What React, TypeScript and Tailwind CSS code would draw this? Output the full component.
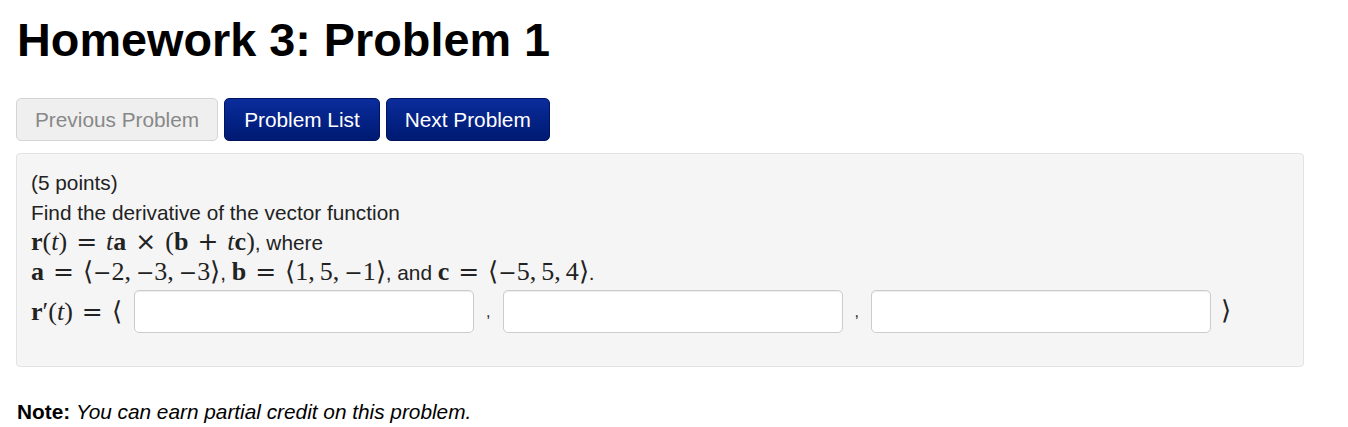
import React from 'react';

const serif = { fontFamily: '"Liberation Serif", "Times New Roman", serif' };
const opFont = { fontFamily: '"DejaVu Sans", sans-serif' };

function M({ children }: { children: React.ReactNode }) {
  return (
    <span className="text-[26px] leading-none" style={serif}>
      {children}
    </span>
  );
}

// relation / binary operator with TeX-like spacing
function Op({ children }: { children: React.ReactNode }) {
  return (
    <span className="mx-[9px] text-[25px] leading-none" style={opFont}>
      {children}
    </span>
  );
}

function Neg() {
  return (
    <span className="text-[22px] leading-none" style={opFont}>
      −
    </span>
  );
}

function Sep() {
  return <span className="mr-[5px]">,</span>;
}

function B({ children }: { children: React.ReactNode }) {
  return <span className="font-bold">{children}</span>;
}

function I({ children }: { children: React.ReactNode }) {
  return <span className="italic">{children}</span>;
}

function AnswerBox() {
  return (
    <input
      type="text"
      className="h-[43px] w-[340px] rounded-[5px] border border-[#cccccc] bg-white shadow-[inset_0_1px_1px_rgba(0,0,0,0.075)] outline-none"
    />
  );
}

export default function App() {
  return (
    <div
      className="min-h-[427px] bg-white px-[16px] pt-[12px] text-[20.8px] text-[#222]"
      style={{ fontFamily: '"Liberation Sans", Arial, sans-serif' }}
    >
      <h1 className="pl-[1px] text-[46.8px] font-bold leading-[56px] text-black">Homework 3: Problem 1</h1>

      <div className="mt-[30px] flex gap-[6px]">
        <button className="h-[43px] rounded-[5px] border border-[#d4d4d4] bg-[#efefef] px-[18px] text-[#888]">
          Previous Problem
        </button>
        <button className="h-[43px] rounded-[5px] border border-[#001560] bg-gradient-to-b from-[#0b2c9c] to-[#001a72] px-[19px] text-white">
          Problem List
        </button>
        <button className="h-[43px] rounded-[5px] border border-[#001560] bg-gradient-to-b from-[#0b2c9c] to-[#001a72] px-[18px] text-white">
          Next Problem
        </button>
      </div>

      <div className="mt-[12px] w-[1288px] rounded-[4px] border border-[#e3e3e3] bg-[#f5f5f5] px-[14px] pb-[33px] pt-[14px] leading-[30px]">
        <div className="h-[30px]">(5 points)</div>
        <div className="h-[30px]">Find the derivative of the vector function</div>
        <div className="h-[30px]">
          <M>
            <B>r</B>(<I>t</I>)<Op>=</Op>
            <I>t</I>
            <B>a</B>
            <Op>×</Op>(<B>b</B>
            <Op>+</Op>
            <I>t</I>
            <B>c</B>)
          </M>
          , where
        </div>
        <div className="h-[30px]">
          <M>
            <B>a</B>
            <Op>=</Op>⟨<Neg />2<Sep /><Neg />3<Sep /><Neg />3⟩
          </M>
          ,{' '}
          <M>
            <B>b</B>
            <Op>=</Op>⟨1<Sep />5<Sep /><Neg />1⟩
          </M>
          , and{' '}
          <M>
            <B>c</B>
            <Op>=</Op>⟨<Neg />5<Sep />5<Sep />4⟩
          </M>
          .
        </div>
        <div className="mt-[2px] flex items-center">
          <M>
            <B>r</B>′(<I>t</I>)<Op>=</Op>⟨
          </M>
          <span className="ml-[12px]">
            <AnswerBox />
          </span>
          <span className="w-[29px] text-center text-[16px] text-[#222]">,</span>
          <AnswerBox />
          <span className="w-[28px] text-center text-[16px] text-[#222]">,</span>
          <AnswerBox />
          <span className="ml-[10px]">
            <M>⟩</M>
          </span>
        </div>
      </div>

      <p className="mt-[29px] pl-[1px] text-black">
        <span className="font-bold">Note:</span> <span className="italic">You can earn partial credit on this problem.</span>
      </p>
    </div>
  );
}
